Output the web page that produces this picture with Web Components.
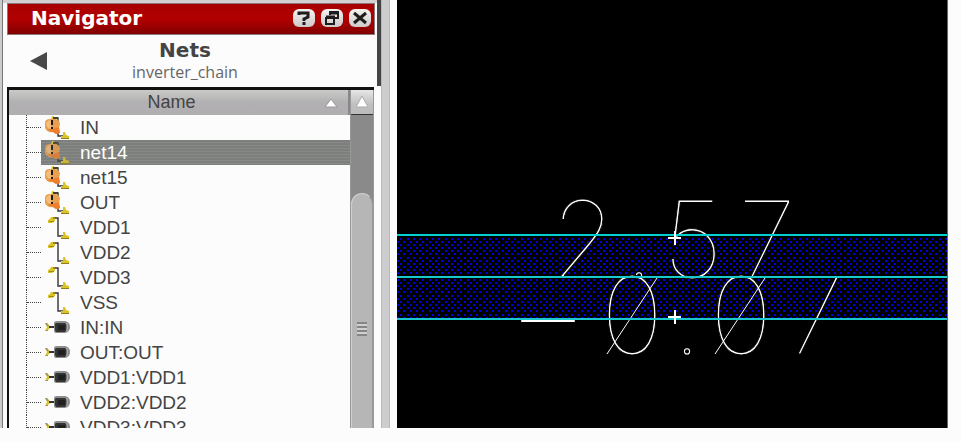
<!DOCTYPE html>
<html lang="en">
<head>
<meta charset="utf-8">
<title>Navigator</title>
<style>
html, body { height: 100%; }
body { margin: 0; background: #fcfcfc; font-family: "Liberation Sans", Arial, sans-serif; color: #444; }
</style>
</head>
<body>
<layout-workspace>
  <nav-panel slot="side" heading="Navigator" subject="Nets" cell="inverter_chain">
    <net-item kind="flagged">IN</net-item>
    <net-item kind="flagged" selected>net14</net-item>
    <net-item kind="flagged">net15</net-item>
    <net-item kind="flagged">OUT</net-item>
    <net-item kind="net">VDD1</net-item>
    <net-item kind="net">VDD2</net-item>
    <net-item kind="net">VDD3</net-item>
    <net-item kind="net">VSS</net-item>
    <net-item kind="pin">IN:IN</net-item>
    <net-item kind="pin">OUT:OUT</net-item>
    <net-item kind="pin">VDD1:VDD1</net-item>
    <net-item kind="pin">VDD2:VDD2</net-item>
    <net-item kind="pin">VDD3:VDD3</net-item>
  </nav-panel>
  <layout-canvas></layout-canvas>
</layout-workspace>

<script>
const define = (name, html, setup) => customElements.define(name, class extends HTMLElement {
  constructor() {
    super();
    this.attachShadow({ mode: 'open' }).innerHTML = html;
  }
  connectedCallback() { if (setup) setup(this, this.shadowRoot); }
});

define('layout-workspace', `
<style>
  :host { display: flex; gap: 7px; height: 100vh; box-sizing: border-box; padding: 0 13px 14px 0; }
</style>
<slot name="side"></slot><slot></slot>`);

/* One row of the net tree: branch line, type icon and name. */
const icons = {
  net: `<path d="M13 3h4v18h6" fill="none" stroke="#333" stroke-width="1.4"/>
    <path d="M7 7V5l2-1 1-2h4v4l-3 2H7z" fill="#dcc428"/><path d="M8 6h5v1H8zM12 2h2v2h-2z" fill="#a08a1c"/>
    <path d="M20 24v-3h2v-4h2l1 3 3 1v3z" fill="#dcc428"/><path d="M20 23h8v1h-8z" fill="#8f7f20"/>`,
  flagged: `<path d="M11 3h6v18h5" fill="none" stroke="#333" stroke-width="1.4"/>
    <path d="M8 5l2-1 1-3h2v3l4 1z" fill="#e3cf2c"/>
    <path d="M4 8q0-4 5-4h5q5 1 5 5l-1 4 1 5-4 1q-2-1-3-2-6 1-8-4z" fill="#e8a050"/>
    <path d="M5 9q1-4 5-4v9q-4 0-5-5z" fill="#f3bd7c"/>
    <path d="M7 14l5 0 6-2 1 6-4 1-3-2q-3 0-5-3z" fill="#ee7e2a"/>
    <path d="M10 5h2v5h-2zM10 12h2v2h-2z" fill="#1f1710"/><path d="M12 2h5v2h-5z" fill="#44402c"/>
    <path d="M20 24v-3h2v-4h2l1 3 3 1v3z" fill="#dcc428"/><path d="M20 23h8v1h-8z" fill="#8f7f20"/>`,
  pin: `<path d="M4 8h2l3 3v2l-3 3H4l2-4z" fill="#dcc428"/><path d="M4 8h2l2 3H6zM5 15h2v1H4z" fill="#9c9470"/>
    <path d="M8 12h6" stroke="#333" stroke-width="2"/>
    <path d="M16 6h8q5 1 5 6t-5 6h-8q-3 0-3-2V8q0-2 3-2z" fill="#8d8d8d"/>
    <path d="M15 8h9l2 2v4l-2 3h-9l-1-2V9z" fill="#343434"/>
    <path d="M17 10h7v5h-7z" fill="#202020"/><path d="M26 8v8" stroke="#bbb"/>`
};
define('net-item', `
<style>
  :host { display: flex; height: 25px; padding-left: 17px; flex: none; font-size: 19px; line-height: 25px; color: #444; }
  .branch { width: 14px; flex: none; border-left: 1px dotted #444; display: flex; align-items: center; }
  .branch i { width: 100%; border-top: 1px dotted #444; }
  .row { flex: 1; display: flex; gap: 9px; white-space: nowrap; }
  svg { width: 30px; height: 25px; flex: none; }
  :host([selected]) .row { color: #fff; background: repeating-linear-gradient(#7d7f7c 0 2px, #888a87 2px 3px); }
  :host([selected]) svg { opacity: .8; }
</style>
<span class="branch"><i></i></span>
<span class="row"><svg viewBox="0 0 30 25" aria-hidden="true"></svg><span><slot></slot></span></span>`,
(host, root) => {
  host.setAttribute('role', 'treeitem');
  root.querySelector('svg').innerHTML = icons[host.getAttribute('kind')];
});

define('title-button', `
<style>
  :host { display: block; }
  button { display: block; width: 22px; height: 18px; padding: 0; border: 0; border-radius: 6px; background: linear-gradient(#f4f2f2, #cfc9c9); }
  svg { display: block; width: 22px; height: 18px; }
  svg * { fill: none; stroke: #1d1d1d; stroke-width: 3; }
  svg .thin { stroke-width: 2; }
</style>
<button type="button"><svg viewBox="0 0 22 18" aria-hidden="true"></svg></button>`,
(host, root) => {
  root.querySelector('button').setAttribute('aria-label', host.getAttribute('action'));
  root.querySelector('svg').innerHTML = {
    Help: '<path d="M6 6V4h9v4l-4 2v2M11 13v3"/>',
    Float: '<path class="thin" d="M9 6V3h8v6h-3M5 9h8v6H5z"/><path d="M9 4h9M5 8h9"/>',
    Close: '<path d="M5 4l12 10M17 4L5 14"/>'
  }[host.getAttribute('action')];
});

define('scroll-strip', `
<style>
  :host { display: flex; flex-direction: column; width: 24px; flex: none; box-sizing: border-box; border: solid #999; border-width: 0 1px; background: #8a8a8a; }
  button { height: 25px; flex: none; padding: 0; border: 0; border-bottom: 1px solid #333; background: linear-gradient(#e6e6e6, #c0c0c0 60%, #bbb); }
  svg { display: block; margin: auto; }
  .thumb { flex: 1; margin-top: 78px; border: 1px solid #aaa; border-color: #d0d0d0 #999 #999 #d0d0d0; border-bottom: 0; border-radius: 11px 11px 0 0; background: #b6b6b6; display: flex; flex-direction: column; align-items: center; justify-content: center; }
  .grip { width: 10px; height: 14px; margin-top: 36px; background: repeating-linear-gradient(#858585 0 2px, #d0d0d0 2px 4px); }
</style>
<button type="button" aria-label="Scroll up"><svg width="16" height="14" viewBox="0 0 16 14"><path d="M8 1l6 11H2z" fill="#fff" stroke="#aaa"/></svg></button>
<div class="thumb"><span class="grip"></span></div>`);

define('nav-panel', `
<style>
  :host { display: grid; grid-template-columns: 3px 1fr 4px 9px; width: 390px; flex: none; min-height: 0; overflow: hidden; }
  .left { background: #ccc; border-right: 1px solid #777; }
  .edge { background: linear-gradient(#444 86px, transparent 86px); }
  .right { background: #cdcdcf; border: solid #b8b8b8; border-width: 0 1px; }
  .panel { display: flex; flex-direction: column; min-height: 0; padding: 0 2px 0 4px; border-top: 3px solid #d2d0d0; }
  header { display: flex; align-items: center; gap: 6px; height: 32px; flex: none; box-sizing: border-box; padding: 0 3px 2px 23px; border: 1px solid #8b7777; background: linear-gradient(#a80000, #b20000 50%, #800000); }
  h1 { margin: 0; flex: 1; font: bold 20px/28px "DejaVu Sans", sans-serif; color: #fff; }
  .context { display: grid; grid-template-columns: 30px 1fr 30px; align-items: center; height: 52px; flex: none; padding: 0 29px 0 17px; text-align: center; box-sizing: border-box; }
  .context button { width: 30px; height: 30px; padding: 0; border: 0; background: none; }
  .context svg { display: block; margin: auto; }
  h2 { margin: 0; font: bold 20px/22px "DejaVu Sans", sans-serif; }
  p { margin: 0; font: 16px/22px "Open Sans", sans-serif; color: #666; }
  .list { flex: 1; display: flex; min-height: 0; border: solid #111; border-width: 3px 0 0 2px; margin-right: 1px; overflow: hidden; }
  .tree { flex: 1; min-width: 0; overflow: hidden; display: flex; flex-direction: column; }
  .column { display: grid; grid-template-columns: 1fr 14px; align-items: center; height: 25px; flex: none; padding: 0 10px; border: 0; border-right: 2px solid #888; background: linear-gradient(#c9cbc8, #b2b0b2 50%, #b0aeb0); font: 18px/25px "Liberation Sans", sans-serif; color: #444; }
</style>
<div class="left"></div>
<section class="panel">
  <header><h1></h1><title-button action="Help"></title-button><title-button action="Float"></title-button><title-button action="Close"></title-button></header>
  <div class="context">
    <button type="button" aria-label="Back"><svg width="18" height="20" viewBox="0 0 18 20"><path d="M0 10L17 1v18z" fill="#484848"/></svg></button>
    <div><h2></h2><p></p></div>
  </div>
  <div class="list">
    <div class="tree">
      <button class="column" type="button"><span>Name</span><svg width="14" height="10" viewBox="0 0 14 10"><path d="M7 1l6 8H1z" fill="#fff" stroke="#999"/></svg></button>
      <slot></slot>
    </div>
    <scroll-strip></scroll-strip>
  </div>
</section>
<div class="edge"></div><div class="right"></div>`,
(host, root) => {
  root.querySelector('h1').textContent = host.getAttribute('heading');
  root.querySelector('h2').textContent = host.getAttribute('subject');
  root.querySelector('p').textContent = host.getAttribute('cell');
  root.querySelector('.tree').setAttribute('role', 'tree');
});

/* Layout view: two hatched wires with their measured values. */
define('layout-canvas', `
<style>
  :host { display: block; flex: 1; min-width: 0; background: #000; border-right: 1px solid #666; overflow: hidden; }
  svg { display: block; width: 100%; height: 100%; }
  text { font-family: Inter, "Liberation Sans", sans-serif; font-weight: 100; font-size: 107px; fill: #fff; stroke: #000; stroke-width: 1; text-anchor: middle; }
  .dot { font-size: 100px; fill: #000; stroke: #fff; stroke-width: 1; }
  .minus { stroke: none; }
  .mark { stroke: #fff; stroke-width: 2; fill: none; }
  .slash { stroke: #fff; stroke-width: 1; }
</style>
<svg role="img" aria-label="Layout view">
  <defs><pattern id="hatch" width="19" height="19" patternUnits="userSpaceOnUse" fill="#0000d8">
    <path d="M0 0h19v19H0z" fill="#000"/>
    <path d="M0 0h2v2H0zM6 0h2v2H6zM13 0h2v2h-2zM3 3h2v2H3zM10 3h2v2h-2zM16 3h2v2h-2zM0 6h2v2H0zM6 6h2v2H6zM13 6h2v2h-2zM3 10h2v2H3zM10 10h2v2h-2zM16 10h2v2h-2zM0 13h2v2H0zM6 13h2v2H6zM13 13h2v2h-2zM3 16h2v2H3zM10 16h2v2h-2zM16 16h2v2h-2z"/>
  </pattern></defs>
  <rect y="235" width="100%" height="84" fill="url(#hatch)"/>
  <text y="278" x="187 242 296 370">2<tspan class="dot">.</tspan>57</text>
  <text y="354" x="151 235 290 344 418"><tspan class="minus">–</tspan>0<tspan class="dot">.</tspan>07</text>
  <path class="slash" d="M210 354L260 278M318 354L368 278"/>
  <rect y="234" width="100%" height="2" fill="#00cfd0"/>
  <rect y="276" width="100%" height="2" fill="#18c8cc"/>
  <rect y="318" width="100%" height="2" fill="#18c8cc"/>
  <path class="mark" d="M271 238h13M278 231v14M271 317h13M278 310v14"/>
</svg>`);
</script>
</body>
</html>
